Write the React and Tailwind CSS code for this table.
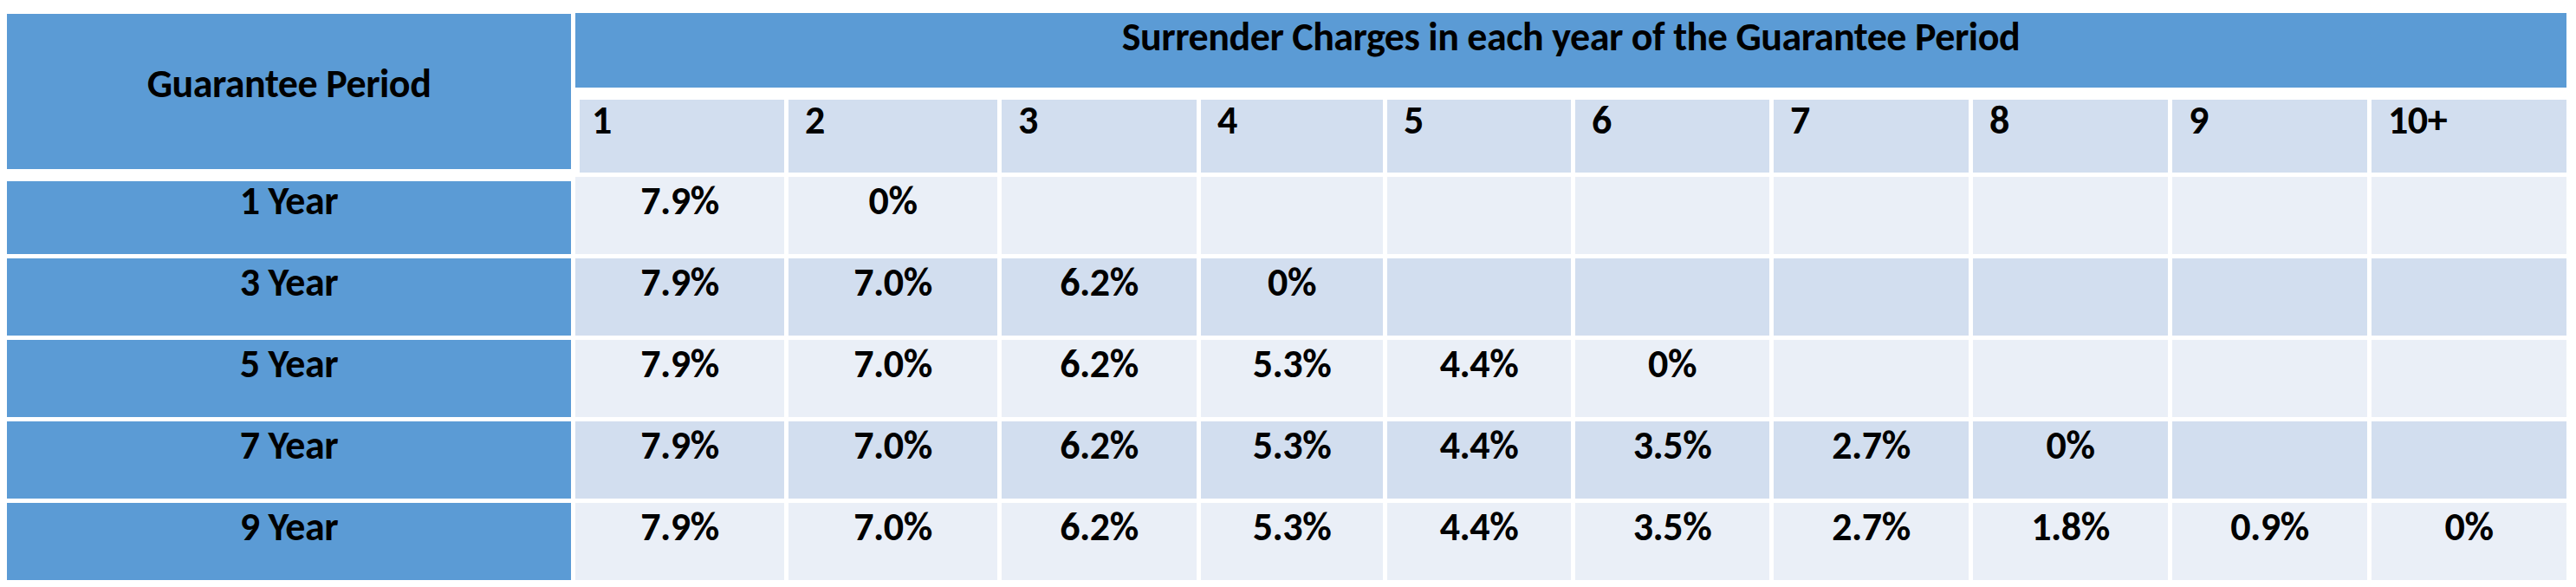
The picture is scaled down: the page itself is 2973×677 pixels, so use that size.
import React from 'react';

const years = ["1", "2", "3", "4", "5", "6", "7", "8", "9", "10+"];

const rows = [
  { label: "1 Year", values: ["7.9%", "0%"] },
  { label: "3 Year", values: ["7.9%", "7.0%", "6.2%", "0%"] },
  { label: "5 Year", values: ["7.9%", "7.0%", "6.2%", "5.3%", "4.4%", "0%"] },
  { label: "7 Year", values: ["7.9%", "7.0%", "6.2%", "5.3%", "4.4%", "3.5%", "2.7%", "0%"] },
  { label: "9 Year", values: ["7.9%", "7.0%", "6.2%", "5.3%", "4.4%", "3.5%", "2.7%", "1.8%", "0.9%", "0%"] },
];

export default function App() {
  return (
    <div className="w-[2973px] h-[677px] bg-white pl-[8px] pt-[16px] font-['Carlito','Lato',sans-serif] font-extrabold text-black text-[46px] leading-[1.2] tracking-[-0.01em]">
      <div className="grid grid-cols-[651px_241px_241px_225px_210px_212px_224px_225px_225px_225px_225px] grid-rows-[85px_93px_repeat(5,89px)] gap-x-[5px] gap-y-[5px]">

        {/* left header */}
        <div className="row-span-2 mb-[4px] bg-[#5B9BD5] text-center pt-[53px]">
          Guarantee Period
        </div>

        {/* top band */}
        <div className="col-span-10 bg-[#5B9BD5] text-center -mt-[1px]">
          Surrender Charges in each year of the Guarantee Period
        </div>

        {/* year numbers */}
        {years.map((y, i) => (
          <div
            key={y}
            className={
              i === 0
                ? "mt-[9px] ml-[5px] bg-[#D2DEEF] pl-[14px] leading-none"
                : "mt-[9px] bg-[#D2DEEF] pl-[19px] leading-none"
            }
          >
            {y}
          </div>
        ))}

        {/* body rows */}
        {rows.map((row, r) => (
          <React.Fragment key={row.label}>
            <div className={r === 0 ? "mt-[5px] bg-[#5B9BD5] text-center" : "bg-[#5B9BD5] text-center"}>
              <span className={r === 0 ? "block -mt-[5px]" : "block"}>{row.label}</span>
            </div>
            {years.map((y, c) => (
              <div
                key={y}
                className={r % 2 === 0 ? "bg-[#EAEFF7] text-center" : "bg-[#D2DEEF] text-center"}
              >
                {row.values[c] || ""}
              </div>
            ))}
          </React.Fragment>
        ))}

      </div>
    </div>
  );
}
